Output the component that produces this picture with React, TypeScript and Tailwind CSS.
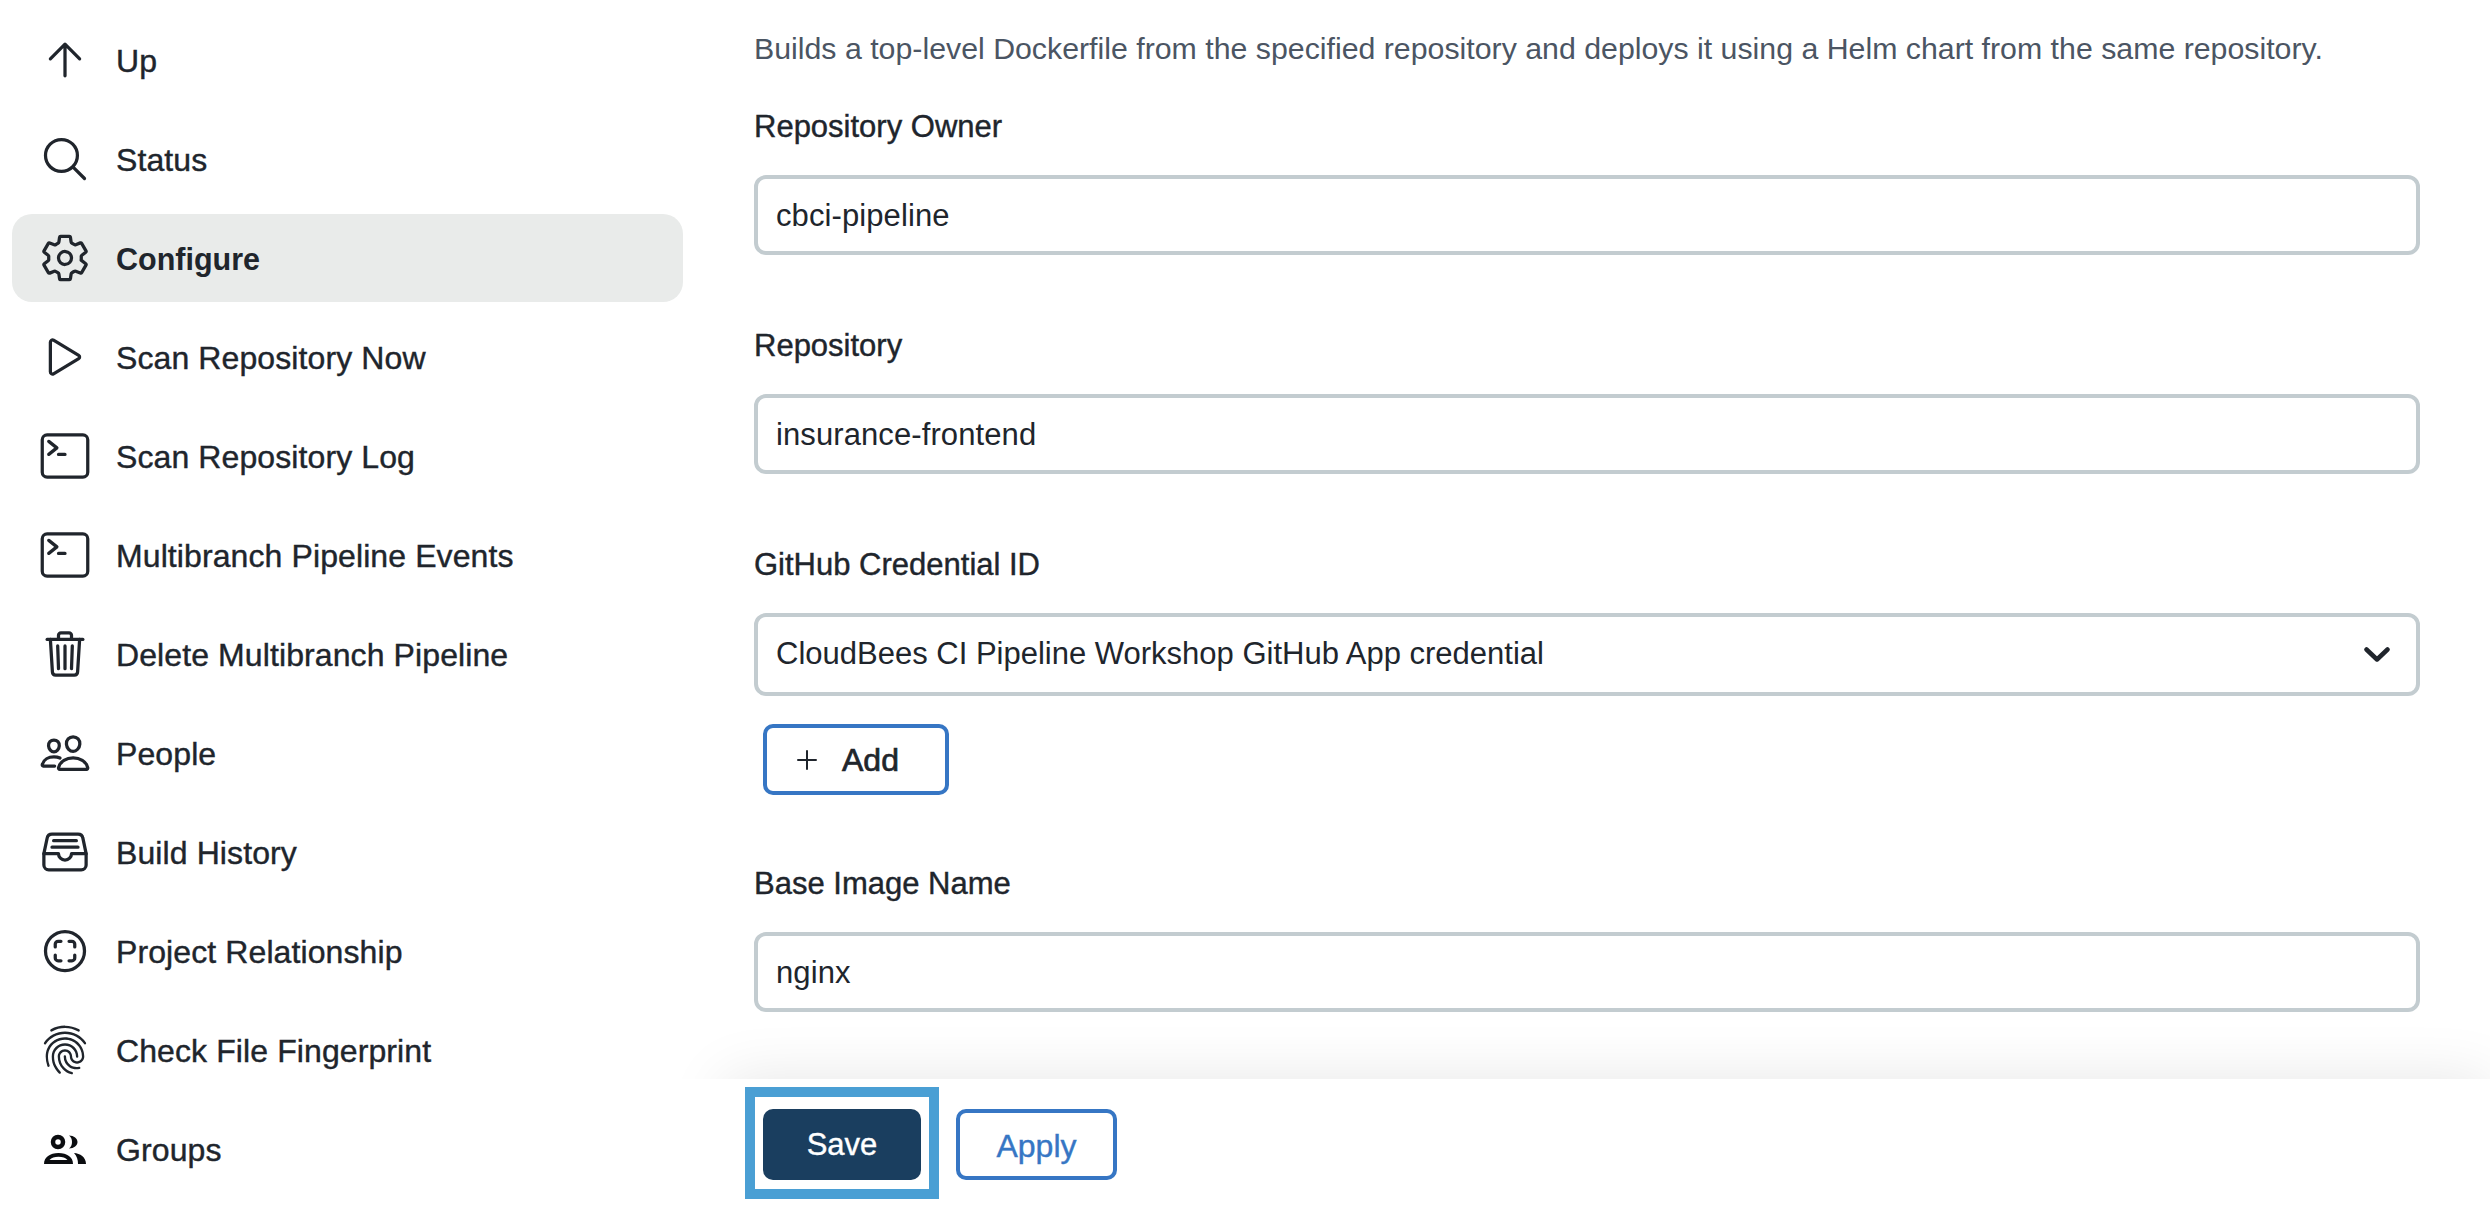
import React from 'react';
import {
  IoAddOutline,
  IoFileTrayFullOutline,
  IoFingerPrintOutline,
  IoPeopleOutline,
  IoPlayOutline,
  IoScanCircleOutline,
  IoSearchOutline,
  IoSettingsOutline,
  IoTerminalOutline,
  IoTrashOutline,
} from 'react-icons/io5';

const ArrowUp: React.FC<{ className?: string }> = ({ className }) => (
  <svg viewBox="0 0 512 512" className={className} fill="none" stroke="currentColor" strokeWidth="32" strokeLinecap="round" strokeLinejoin="round">
    <path d="M112 244l144-144 144 144M256 120v292" />
  </svg>
);

const GroupsIcon: React.FC<{ className?: string }> = ({ className }) => (
  <svg viewBox="0 0 52 52" className={className} fill="#0b0d10">
    <circle cx="19" cy="19" r="5" fill="none" stroke="#0b0d10" strokeWidth="4.5" />
    <path d="M30 12.500c5 0 8.500 3 8.500 6.500s-3.500 6.500-8.500 6.500c2-1.600 3-3.800 3-6.500s-1-4.900-3-6.500z" />
    <path d="M5 41c0-7 6-11 14.500-11s14.500 4 14.500 11z" />
    <path d="M10.500 37c2-2 5-3.200 9-3.200s7 1.200 9 3.200z" fill="#ffffff" />
    <path d="M35 30c6 .5 12 4 12 11h-8c0-4-1-8-4-11z" />
  </svg>
);

const NAV_ITEMS = [
  { label: 'Up', icon: ArrowUp },
  { label: 'Status', icon: IoSearchOutline },
  { label: 'Configure', icon: IoSettingsOutline, active: true },
  { label: 'Scan Repository Now', icon: IoPlayOutline },
  { label: 'Scan Repository Log', icon: IoTerminalOutline },
  { label: 'Multibranch Pipeline Events', icon: IoTerminalOutline },
  { label: 'Delete Multibranch Pipeline', icon: IoTrashOutline },
  { label: 'People', icon: IoPeopleOutline },
  { label: 'Build History', icon: IoFileTrayFullOutline },
  { label: 'Project Relationship', icon: IoScanCircleOutline },
  { label: 'Check File Fingerprint', icon: IoFingerPrintOutline },
  { label: 'Groups', icon: GroupsIcon },
];

const TextField: React.FC<{ label: string; value: string }> = ({ label, value }) => (
  <div className="flex flex-col">
    <label className="h-[40px] flex items-center text-[31px] leading-none [-webkit-text-stroke:0.4px_currentColor]">{label}</label>
    <div className="mt-[29px] h-[80px] flex items-center px-[18px] pt-[2px] border-4 border-[#c3ccd0] rounded-[12px] text-[31px] tracking-[0.1px]">
      {value}
    </div>
  </div>
);

const App: React.FC = () => {
  return (
    <div className="flex w-[2490px] h-[1218px] overflow-hidden bg-white text-[#20252c] font-['Liberation_Sans',sans-serif]">
      {/* sidebar */}
      <nav className="w-[695px] shrink-0 pt-[16px] pl-[12px] pr-[12px] flex flex-col gap-[11px]">
        {NAV_ITEMS.map((item) => (
          <div
            key={item.label}
            className={`h-[88px] shrink-0 flex items-center rounded-[20px] pl-[27px] ${item.active ? 'bg-[#e9ebea]' : ''}`}
          >
            <item.icon className="w-[52px] h-[52px] shrink-0" />
            <span className={`ml-[25px] pt-[2px] leading-none ${item.active ? 'font-bold text-[30.5px]' : 'text-[32px] tracking-[0.1px] [-webkit-text-stroke:0.4px_currentColor]'}`}>{item.label}</span>
          </div>
        ))}
      </nav>

      {/* main form */}
      <main className="relative flex-1 flex flex-col">
        <div className="flex-1 pl-[59px] pr-[70px] pt-[30px]">
          <p className="text-[30.3px] leading-[38px] text-[#4b5563] whitespace-nowrap">
            Builds a top-level Dockerfile from the specified repository and deploys it using a Helm chart from the same repository.
          </p>
          <div className="mt-[38px] flex flex-col gap-[70px]">
            <TextField label="Repository Owner" value="cbci-pipeline" />
            <TextField label="Repository" value="insurance-frontend" />
            <div className="flex flex-col -mb-[2px]">
              <label className="h-[40px] flex items-center text-[31px] leading-none [-webkit-text-stroke:0.4px_currentColor]">GitHub Credential ID</label>
              <div className="mt-[29px] h-[83px] flex items-center justify-between pl-[18px] pr-[26px] border-4 border-[#c3ccd0] rounded-[12px] text-[31px]">
                <span>CloudBees CI Pipeline Workshop GitHub App credential</span>
                <svg viewBox="0 0 26 15" className="w-[26px] h-[15px]" fill="none" stroke="currentColor" strokeWidth="4.5" strokeLinecap="round" strokeLinejoin="round">
                  <path d="M2.500 2.500 13 12.500 23.500 2.500" />
                </svg>
              </div>
              <button className="mt-[28px] ml-[9px] w-[186px] h-[71px] flex items-center pl-[24px] gap-[19px] border-4 border-[#3676c4] rounded-[10px] text-[32px] [-webkit-text-stroke:0.7px_currentColor]">
                <IoAddOutline className="w-[32px] h-[32px]" />
                Add
              </button>
            </div>
            <TextField label="Base Image Name" value="nginx" />
          </div>
        </div>

        {/* shadow is clipped so it only shows above the bar */}
        <div className="absolute -left-[40px] right-0 bottom-[139px] h-[80px] overflow-hidden">
          <div className="absolute left-[70px] right-0 top-[80px] h-[139px] shadow-[0_0_60px_rgba(0,0,0,0.1)]"></div>
        </div>
        <div className="relative h-[139px] shrink-0 flex items-start gap-[35px] pl-[68px] pt-[30px] bg-white">
          <div className="relative">
            <button className="w-[158px] h-[71px] pt-[2px] rounded-[10px] bg-[#1a3e5f] text-white text-[31px] [-webkit-text-stroke:0.4px_currentColor]">Save</button>
            <div className="absolute -left-[18px] -right-[18px] -top-[22px] -bottom-[19px] border-[10px] border-[#4a9fd4]"></div>
          </div>
          <button className="w-[161px] h-[71px] pt-[2px] rounded-[10px] border-4 border-[#3676c4] text-[#3676c4] text-[32px] [-webkit-text-stroke:0.4px_currentColor]">Apply</button>
        </div>
      </main>
    </div>
  );
};

export default App;
